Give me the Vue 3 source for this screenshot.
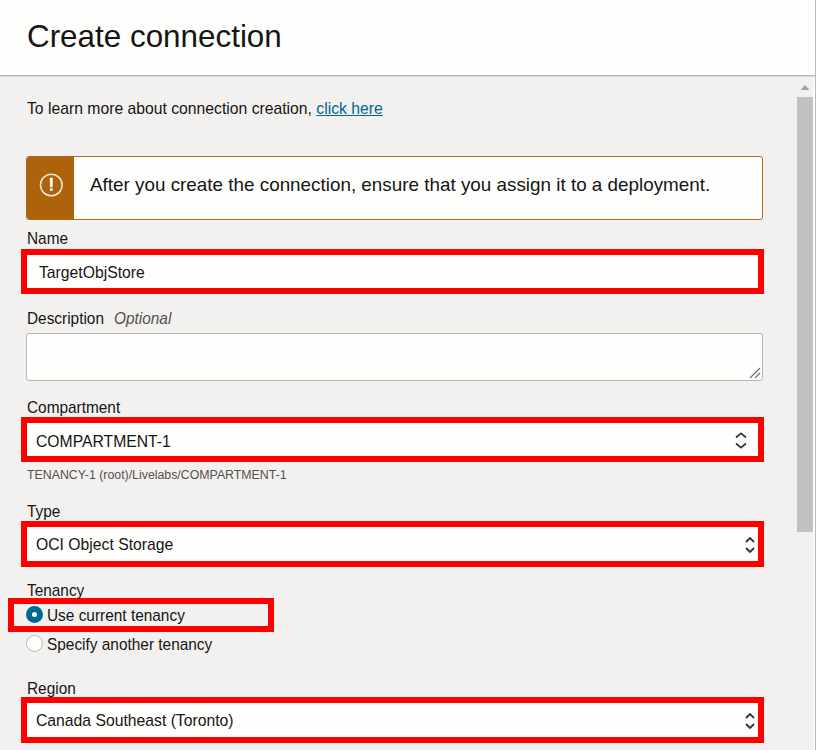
<script setup>
import { ref } from 'vue'

const name = ref('TargetObjStore')
const tenancyOptions = [
  { id: 'current', label: 'Use current tenancy', highlighted: true },
  { id: 'other', label: 'Specify another tenancy', highlighted: false },
]
const tenancy = ref('current')
</script>

<template>
  <div class="panel">
    <header class="header">
      <h1 class="title">Create connection</h1>
    </header>
    <div class="body">
      <main class="form">
        <p class="intro text"><span class="intro-copy">To learn more about connection creation, <a class="link">click here</a></span></p>

        <section class="alert">
          <div class="alert-icon">
            <svg width="24" height="24" viewBox="0 0 24 24">
              <circle cx="12.300" cy="12" r="10.8" fill="none" stroke="#f3e3d2" stroke-width="1.5" />
              <path d="M11 5h2.600l-.3 9h-2z" fill="#fff" stroke="#fff" stroke-width=".5" />
              <rect x="11" y="15.300" width="2.600" height="2.400" fill="#fff" />
            </svg>
          </div>
          <p class="alert-text"><span class="alert-copy">After you create the connection, ensure that you assign it to a deployment.</span></p>
        </section>

        <label class="label name-label"><span class="text">Name</span></label>
        <div class="field highlight name-field"><span class="text">{{ name }}</span></div>

        <label class="label description-label"><span class="text">Description</span><em class="text optional">Optional</em></label>
        <div class="textarea">
          <svg class="grip" width="12" height="12" viewBox="0 0 12 12">
            <path d="M1 11L11 1M6 11l5-5" fill="none" stroke="#6b6b6b" stroke-width="1.1" />
          </svg>
        </div>

        <label class="label compartment-label"><span class="text">Compartment</span></label>
        <div class="field highlight compartment-field">
          <span class="text">COMPARTMENT-1</span>
          <svg width="12" height="18" viewBox="0 0 12 18">
            <path d="M1 6.500L6 2.300 11 6.500M1 12.500l5 4.200L11 12.500" fill="none" stroke="#333" stroke-width="1.7" />
          </svg>
        </div>
        <p class="helper"><span class="helper-copy">TENANCY-1 (root)/Livelabs/COMPARTMENT-1</span></p>

        <label class="label type-label"><span class="text">Type</span></label>
        <div class="field highlight select">
          <span class="text">OCI Object Storage</span>
          <svg width="10" height="20" viewBox="0 0 10 20">
            <path d="M1 8l4-4 4 4M1 14l4 4 4-4" fill="none" stroke="#333" stroke-width="1.8" />
          </svg>
        </div>

        <label class="label tenancy-label"><span class="text">Tenancy</span></label>
        <div
          v-for="option in tenancyOptions"
          :key="option.id"
          class="radio"
          :class="{ highlight: option.highlighted }"
          @click="tenancy = option.id"
        >
          <span class="dot" :class="{ checked: tenancy === option.id }"></span>
          <span class="text">{{ option.label }}</span>
        </div>

        <label class="label region-label"><span class="text">Region</span></label>
        <div class="field highlight select">
          <span class="text">Canada Southeast (Toronto)</span>
          <svg width="10" height="20" viewBox="0 0 10 20">
            <path d="M1 8l4-4 4 4M1 14l4 4 4-4" fill="none" stroke="#333" stroke-width="1.8" />
          </svg>
        </div>
      </main>
      <aside class="scrollbar">
        <svg width="16" height="20" viewBox="0 0 16 20"><path d="M3.500 13L8 8l4.500 5z" fill="#a0a0a0" /></svg>
        <div class="thumb"></div>
      </aside>
    </div>
  </div>
</template>

<style>
body {
  margin: 0;
  overflow: hidden;
}
</style>

<style scoped>
* {
  box-sizing: border-box;
}
.panel {
  width: 816px;
  height: 750px;
  display: flex;
  flex-direction: column;
  overflow: hidden;
  background: #f3f1f0;
  border-right: 1px solid #bcbab8;
  color: #161513;
  font-family: "Liberation Sans", Arial, sans-serif;
}
.header {
  height: 76px;
  flex: none;
  padding: 18px 27px 0;
  background: #fefefd;
  border-bottom: 1px solid #b9b7b5;
}
.title {
  margin: 0;
  font-size: 31.4px;
  line-height: 38px;
  font-weight: 400;
}
.body {
  flex: 1;
  display: flex;
  justify-content: space-between;
  border-top: 1px solid #dddbd9;
}
.form {
  width: 743px;
  margin-left: 21px;
  display: flex;
  flex-direction: column;
}
p {
  margin: 0;
}
.text {
  display: inline-block;
  font-size: 17px;
  line-height: 20px;
  white-space: nowrap;
  transform: scaleX(0.925);
  transform-origin: left;
}
.intro {
  margin: 22px 0 0 6px;
}
.link {
  color: #00688c;
  text-decoration: underline;
}
.alert {
  display: flex;
  width: 737px;
  height: 64px;
  margin: 37px 0 0 5px;
  background: #fefefd;
  border: 1px solid #b0691a;
  border-radius: 3px;
  overflow: hidden;
}
.alert-icon {
  width: 47px;
  padding: 16px 0 0 12px;
  background: #ac630c;
}
.alert-text {
  padding: 16px 0 0 16px;
  font-size: 19px;
  line-height: 24px;
  white-space: nowrap;
}
.alert-copy {
  display: inline-block;
  transform: scaleX(0.992);
  transform-origin: left;
}
.label {
  display: flex;
  height: 20px;
  padding-left: 6px;
}
.label .text {
  transform: translateY(1px) scaleX(0.905);
}
.highlight {
  border: 6px solid #f00;
}
.field {
  display: flex;
  justify-content: space-between;
  align-items: center;
  height: 45px;
  background: #fefefd;
  padding: 0 3.5px 0 9px;
}
.select .text {
  padding-top: 2px;
}
.name-label {
  margin-top: 8px;
}
.name-field {
  margin-top: 1px;
  padding-left: 12px;
}
.name-field .text {
  padding-top: 2px;
}
.description-label {
  margin-top: 14px;
}
.optional {
  margin-left: 2px;
  color: #55504b;
}
.textarea {
  display: flex;
  justify-content: flex-end;
  align-items: flex-end;
  width: 737px;
  height: 48px;
  margin: 5px 0 0 5px;
  background: #fefefd;
  border: 1px solid #bcb6b1;
  border-radius: 3px;
  padding: 1px;
}
.compartment-label {
  margin-top: 16px;
}
.compartment-field {
  padding-right: 11px;
}
.compartment-field .text {
  padding-top: 4px;
}
.helper {
  margin: 4px 0 0 6px;
  height: 18px;
  font-size: 12px;
  line-height: 18px;
  color: #55504b;
}
.helper-copy {
  display: inline-block;
  transform: scaleX(1.028);
  transform-origin: left;
}
.type-label {
  margin-top: 17px;
}
.select {
  height: 46px;
}
.tenancy-label {
  margin-top: 13px;
  height: 18px;
}
.radio {
  display: flex;
  align-items: center;
  width: 266px;
  height: 24px;
  margin-left: -13px;
  padding-left: 18px;
}
.radio.highlight {
  height: 34px;
  padding-left: 12px;
}
.radio .text {
  padding-top: 2px;
  transform: scaleX(0.906);
}
.dot {
  width: 17px;
  height: 17px;
  margin: 0 4px 2px 0;
  border: 1px solid #bcb6b1;
  border-radius: 50%;
  background: #fefefd;
}
.dot.checked {
  border: 6px solid #00688c;
}
.region-label {
  margin-top: 22px;
  height: 19px;
}
.scrollbar {
  width: 18px;
  display: flex;
  flex-direction: column;
  background: #f1f1f1;
  border-right: 2px solid #fafafa;
}
.thumb {
  height: 435px;
  background: #c1c1c1;
}
</style>
